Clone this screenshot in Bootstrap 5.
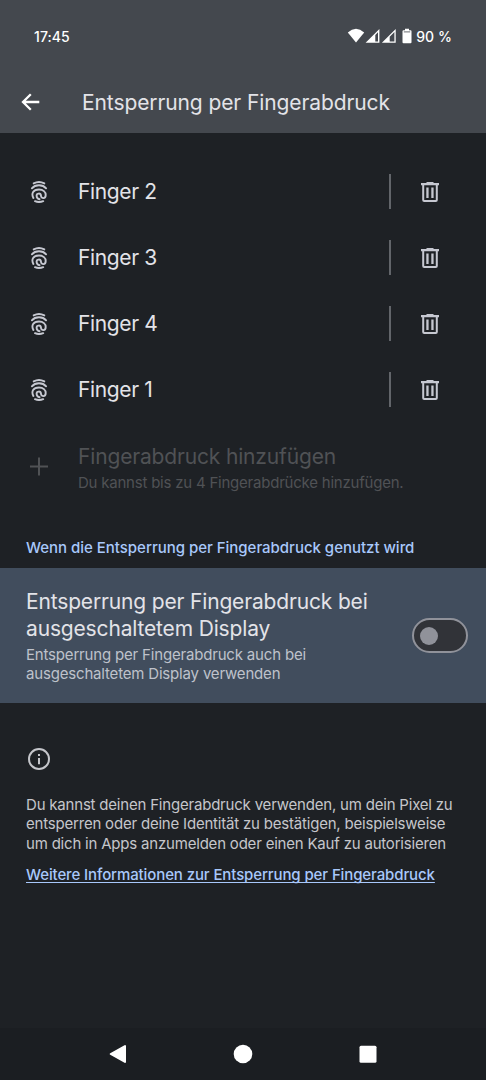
<!DOCTYPE html>
<html lang="de" data-bs-theme="dark">
<head>
<meta charset="utf-8">
<meta name="viewport" content="width=device-width, initial-scale=1">
<title>Entsperrung per Fingerabdruck</title>
<link href="https://cdn.jsdelivr.net/npm/bootstrap@5.3.0/dist/css/bootstrap.min.css" rel="stylesheet">
<style>
body{background:#1e2125;color:#e3e3e8;font-family:Inter,Roboto,sans-serif;height:1080px;overflow:hidden}
svg{display:block;flex:none}
.topbar{background:#44484e;height:132.5px}
.statusbar{height:72px;color:#fff;font-size:14px;letter-spacing:.08px;font-weight:500;padding:0 34px}
.pct{margin-left:2px}
.appbar{height:60px;padding-left:19px}
.headline{font-size:21px;letter-spacing:-.1px;line-height:28px;color:#e3e3e8;margin-left:39px;padding-top:1px}
.fingers{padding-top:25.500px}
.pref{height:66px;padding-left:26px}
.pref-add{height:88px;color:#505255}
.pref-add .pref-body{padding-top:3px}
.pref-title{font-size:21px;letter-spacing:-.16px;line-height:27px}
.finger-name{letter-spacing:-.35px}
.pref-sub{font-size:15px;letter-spacing:-.22px;line-height:19.3px}
.pref-body{margin-left:26px}
.ico{color:#c6c8d1}
.pref .ico svg,.pref svg.ico{margin-top:1px}
.pref-end{width:97px;height:35px;border-left:2px solid #62656a;padding-left:27px}
.category{height:58px;padding:28px 26px 0;font-size:15px;line-height:20px;font-weight:500;letter-spacing:-.02px;color:#a8c8fb}
.pref-switch{height:135px;background:#414d5d;padding:0 18px 0 26px}
.pref-switch .pref-sub,.pref-add .pref-sub{padding-top:3px}
.pref-switch .pref-sub{color:#bec2cb;letter-spacing:-.18px}
.toggle{width:56px;height:35px;border:2px solid #90929a;border-radius:18px;background:#313338;padding-left:6px}
.knob{width:18px;height:18px;border-radius:50%;background:#90929a}
.about{padding:43px 26px 0;color:#c5c6cb}
.about p{font-size:15px;letter-spacing:-.2px;line-height:19.3px;margin:23px 0 9px}
.about a{font-size:15px;letter-spacing:-.11px;line-height:20px;font-weight:500;color:#a8c8fb;text-underline-offset:2px;text-decoration-skip-ink:none}
.navkeys{height:52px;background:#1b1e22;padding:0 108px}
</style>
</head>
<body class="d-flex flex-column">
<svg class="d-none">
<symbol id="print" viewBox="0 0 16 22"><g fill="none" stroke="currentColor" stroke-width="1.9" stroke-linecap="round"><path d="M2.700 2.400Q8-.4 13.300 2.400M.9 7.300Q3.400 4.300 8 4.300T15.100 7.300M2.400 17C0 12.500 2.200 8.500 8 8.500C12.300 8.500 14.700 11 14.700 14C14.700 18 10.200 18 10 14.800C9.700 11.700 5.500 11.900 5.600 15C5.700 17 7.200 18 8.600 18.200M4 20.200Q8 21.900 12.200 20.200"/></g></symbol>
<symbol id="bin" viewBox="0 0 18 20"><path fill="currentColor" d="M5.500 0h7v1H18v2.300h-1.200V18q0 2-2 2H3.200q-2 0-2-2V3.300H0V1h5.500zM3.200 3.300V18h11.600V3.300zM5.300 5.500h2.300v10.400H5.300zm5 0h2.300v10.400h-2.300z"/></symbol>
</svg>
<header class="topbar">
<div class="statusbar d-flex align-items-center justify-content-between">
<span class="clock">17:45</span>
<span class="d-flex align-items-center">
<svg width="67" height="16" viewBox="0 0 67 16" fill="#fff"><path d="M.8 4.400Q9-2.800 17.200 4.400L9 14.600z"/><path fill-rule="evenodd" d="M18.600 14.800L32.400 1v13.800zM28.300 6.900v6.600H31V4.200zM34.900 14.800L48.700 1v13.800zM42.700 8.800v4.700h4.700V4.100z"/><path d="M58 .8h4v1.400h1.500q1 0 1 1v11q0 1-1 1h-7q-1 0-1-1v-11q0-1 1-1H58z"/><path d="M56.800 3.900h6.400" stroke="#44484e" stroke-width=".8"/></svg>
<span class="pct">90 %</span>
</span>
</div>
<div class="appbar d-flex align-items-center">
<svg width="24" height="24" viewBox="0 0 24 24" fill="none" stroke="#fff" stroke-width="2.300"><path d="M20.300 12H4M11.800 4.200L4 12l7.800 7.800"/></svg>
<h1 class="headline mb-0 fw-normal">Entsperrung per Fingerabdruck</h1>
</div>
</header>
<main class="flex-grow-1">
<section class="fingers">
<div class="pref d-flex align-items-center"><svg class="ico" width="26" height="22"><use href="#print"/></svg><span class="pref-body pref-title finger-name flex-grow-1">Finger 2</span><span class="pref-end ico d-flex align-items-center"><svg width="24" height="20"><use href="#bin"/></svg></span></div>
<div class="pref d-flex align-items-center"><svg class="ico" width="26" height="22"><use href="#print"/></svg><span class="pref-body pref-title finger-name flex-grow-1">Finger 3</span><span class="pref-end ico d-flex align-items-center"><svg width="24" height="20"><use href="#bin"/></svg></span></div>
<div class="pref d-flex align-items-center"><svg class="ico" width="26" height="22"><use href="#print"/></svg><span class="pref-body pref-title finger-name flex-grow-1">Finger 4</span><span class="pref-end ico d-flex align-items-center"><svg width="24" height="20"><use href="#bin"/></svg></span></div>
<div class="pref d-flex align-items-center"><svg class="ico" width="26" height="22"><use href="#print"/></svg><span class="pref-body pref-title finger-name flex-grow-1">Finger 1</span><span class="pref-end ico d-flex align-items-center"><svg width="24" height="20"><use href="#bin"/></svg></span></div>
<div class="pref pref-add d-flex align-items-center"><svg width="26" height="26" viewBox="0 0 26 26" stroke="currentColor" stroke-width="2"><path d="M4 13.500h18M13 4.500v18"/></svg><div class="pref-body"><div class="pref-title">Fingerabdruck hinzufügen</div><div class="pref-sub">Du kannst bis zu 4 Fingerabdrücke hinzufügen.</div></div></div>
</section>
<h2 class="category mb-0"><span>Wenn die Entsperrung per Fingerabdruck genutzt wird</span></h2>
<section class="pref-switch d-flex align-items-center justify-content-between">
<div><div class="pref-title">Entsperrung per Fingerabdruck bei<br>ausgeschaltetem Display</div><div class="pref-sub">Entsperrung per Fingerabdruck auch bei<br>ausgeschaltetem Display verwenden</div></div>
<div class="toggle d-flex align-items-center" role="switch" aria-checked="false"><span class="knob"></span></div>
</section>
<section class="about">
<svg width="26" height="26" viewBox="0 0 26 26" fill="none" stroke="currentColor"><circle cx="13" cy="13" r="10" stroke-width="2"/><path stroke-width="2" d="M13 12v6.300M13 8v2"/></svg>
<p class="text-nowrap">Du kannst deinen Fingerabdruck verwenden, um dein Pixel zu<br>entsperren oder deine Identität zu bestätigen, beispielsweise<br>um dich in Apps anzumelden oder einen Kauf zu autorisieren</p>
<a href="#">Weitere Informationen zur Entsperrung per Fingerabdruck</a>
</section>
</main>
<footer class="navkeys d-flex align-items-center justify-content-between">
<svg width="20" height="20" viewBox="0 0 20 20" fill="#fff" stroke="#fff" stroke-width="2" stroke-linejoin="round"><path d="M2.700 10L17 2v16z"/></svg>
<svg width="20" height="20" viewBox="0 0 20 20" fill="#fff"><circle cx="10" cy="10" r="9.300"/></svg>
<svg width="20" height="20" viewBox="0 0 20 20" fill="#fff"><rect x="1.500" y="1.800" width="17" height="17" rx="1.500"/></svg>
</footer>
<script src="https://cdn.jsdelivr.net/npm/bootstrap@5.3.0/dist/js/bootstrap.bundle.min.js"></script>
</body>
</html>
